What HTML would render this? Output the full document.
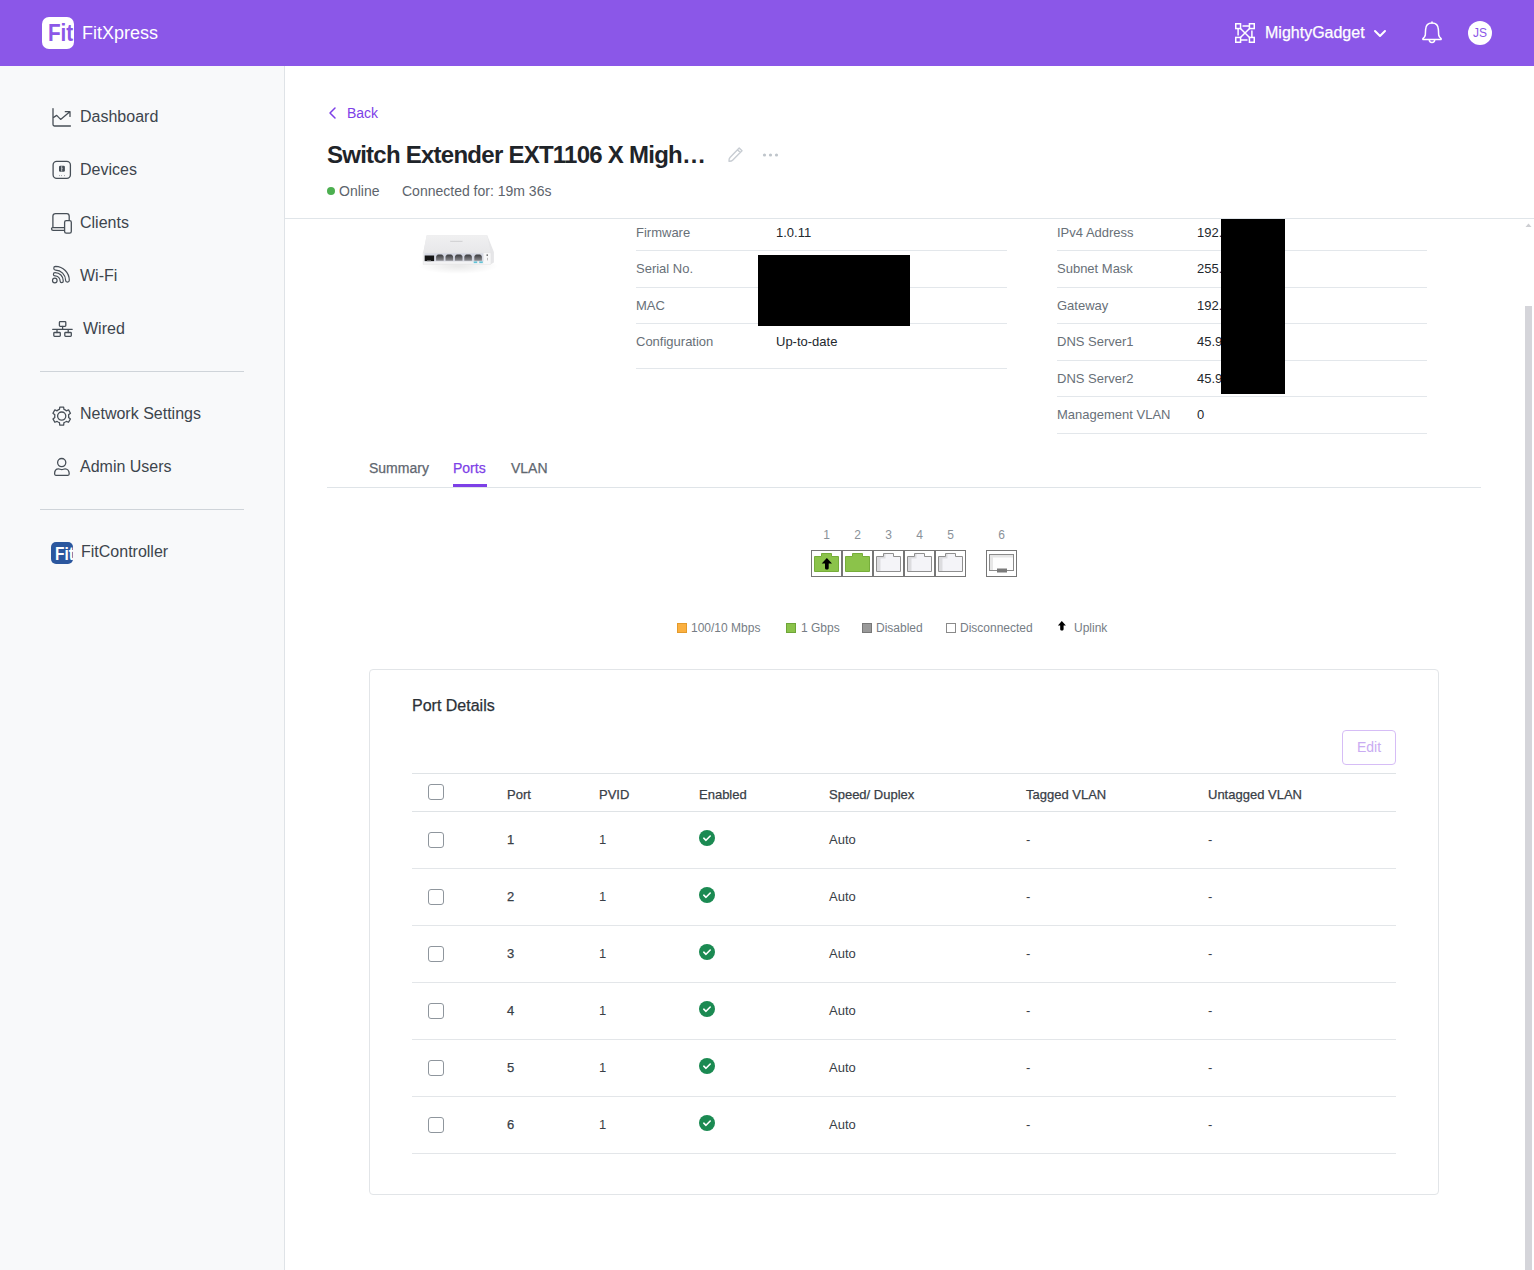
<!DOCTYPE html>
<html><head><meta charset="utf-8">
<style>
*{box-sizing:border-box;margin:0;padding:0}
html,body{width:1534px;height:1270px;overflow:hidden;background:#fff;font-family:"Liberation Sans",sans-serif;}
.a{position:absolute;white-space:nowrap;line-height:20px}
svg{position:absolute;overflow:visible}
#hdr{position:absolute;left:0;top:0;width:1534px;height:66px;background:#8b57e8}
#side{position:absolute;left:0;top:66px;width:285px;height:1204px;background:#f8f9fa;border-right:1px solid #dfe3e7}
.nav{font-size:16px;color:#3d454d}
.dv{position:absolute;left:40px;width:204px;height:1px;background:#cfd4d9}
.hl{position:absolute;height:1px;background:#e3e7eb}
.lbl{font-size:13px;color:#687078}
.val{font-size:13px;color:#23282d}
.med{-webkit-text-stroke:0.25px currentColor}
.th{font-size:13px;color:#394047}
.td{font-size:13px;color:#394047}
.pn{font-size:12px;color:#8a9199;text-align:center;width:20px}
.lg{font-size:12px;color:#767d85}
.cb{position:absolute;width:16px;height:16px;border:1px solid #8f969d;border-radius:3px;background:#fff}
</style></head>
<body>
<!-- HEADER -->
<div id="hdr">
  <div class="a" style="left:42px;top:17px;width:32px;height:32px;background:#fff;border-radius:7px;overflow:hidden">
    <div class="a" style="left:6px;top:6px;font-size:24px;font-weight:bold;color:#8b57e8;transform:scaleX(0.86);transform-origin:0 0;line-height:20px">Fit</div>
  </div>
  <div class="a" style="left:82px;top:23px;font-size:18px;color:#fff">FitXpress</div>
  <svg style="left:1235px;top:23px" width="20" height="20" viewBox="0 0 20 20" fill="none" stroke="#fff" stroke-width="1.5">
    <rect x="0.75" y="0.75" width="4.8" height="4.8"/><rect x="14.45" y="0.75" width="4.8" height="4.8"/>
    <rect x="0.75" y="14.45" width="4.8" height="4.8"/><rect x="14.45" y="14.45" width="4.8" height="4.8"/>
    <path d="M7.5 3.1H14.4M3.1 5.6V12.5M5.6 16.9H12.5M16.9 7.5V14.4M5.2 5.2L14.8 14.8M14.8 5.2L5.2 14.8"/>
  </svg>
  <div class="a med" style="left:1265px;top:23px;font-size:16px;color:#fff">MightyGadget</div>
  <svg style="left:1374px;top:30px" width="12" height="8" viewBox="0 0 12 8" fill="none" stroke="#fff" stroke-width="2" stroke-linecap="round" stroke-linejoin="round">
    <path d="M1 1L6 6L11 1"/>
  </svg>
  <svg style="left:1422px;top:21px" width="20" height="23" viewBox="0 0 20 23" fill="none" stroke="#fff" stroke-width="1.5" stroke-linejoin="round">
    <path d="M10 2.1C6.2 2.1 3.8 4.6 3.6 8.6L3.3 14.2C3.1 15.6 2.2 16.7 0.9 17.7V18.5H19.1V17.7C17.8 16.7 16.9 15.6 16.7 14.2L16.4 8.6C16.2 4.6 13.8 2.1 10 2.1Z"/>
    <path d="M10 0.9V2.1" stroke-linecap="round"/>
    <path d="M7.3 18.7A2.7 2.7 0 0 0 12.7 18.7"/>
  </svg>
  <div class="a" style="left:1468px;top:21px;width:24px;height:24px;border-radius:50%;background:#fff"></div>
  <div class="a" style="left:1468px;top:23px;width:24px;text-align:center;font-size:12px;color:#8b57e8">JS</div>
</div>

<!-- SIDEBAR -->
<div id="side"></div>
<!-- Dashboard icon -->
<svg style="left:48px;top:104px" width="28" height="28" viewBox="0 0 28 28" fill="none" stroke="#474f57" stroke-width="1.3" stroke-linecap="round" stroke-linejoin="round">
  <path d="M5 4.6V20.6C5 21.4 5.6 22 6.4 22H22.4"/>
  <path d="M5.6 13.4L8.7 11.4L12.6 15.4L21.8 7.7M17.3 7.7H22V12.4"/>
</svg>
<div class="a nav" style="left:80px;top:107px">Dashboard</div>
<!-- Devices icon -->
<svg style="left:48px;top:156px" width="28" height="28" viewBox="0 0 28 28" fill="none" stroke="#474f57" stroke-width="1.3">
  <rect x="5.1" y="5.45" width="17.3" height="17" rx="3.6"/>
  <rect x="11" y="9.8" width="5.9" height="6" rx="1.2" fill="#474f57" stroke="none"/>
  <path d="M13.7 10.2V15.4" stroke="#f8f9fa" stroke-width="0.7"/>
  <path d="M13.8 12.3L14.8 12.8L13.8 13.3Z" fill="#f8f9fa" stroke="none"/>
  <path d="M11.3 19.6H11.9M13.2 19.6H13.8M16 19.6H16.6" stroke-width="0.8"/>
</svg>
<div class="a nav" style="left:80px;top:160px">Devices</div>
<!-- Clients icon -->
<svg style="left:48px;top:208px" width="28" height="28" viewBox="0 0 28 28" fill="none" stroke="#474f57" stroke-width="1.3" stroke-linejoin="round">
  <path d="M4.9 19.3V8.3C4.9 6.6 5.9 5.6 7.6 5.6H18.8C20.4 5.6 21.2 6.6 21.2 8.3V12.3"/>
  <path d="M16.4 19.6H4.6C3.9 19.6 3.6 20 3.6 20.6V20.9C3.6 21.8 4.2 22.3 5.1 22.3H16.4"/>
  <rect x="16.6" y="12.6" width="6.7" height="12.6" rx="1.7"/>
</svg>
<div class="a nav" style="left:80px;top:213px">Clients</div>
<!-- WiFi icon -->
<svg style="left:48px;top:262px" width="28" height="28" viewBox="0 0 28 28" fill="none" stroke="#474f57" stroke-width="1.2" stroke-linejoin="round">
  <circle cx="6.8" cy="18.5" r="2.3"/>
  <path d="M7.6 4.4A14 14 0 0 1 21.3 18.2A1.85 1.85 0 0 1 17.6 18.2A10.3 10.3 0 0 0 7.6 8.1A1.85 1.85 0 0 1 7.6 4.4Z"/>
  <path d="M7 10.6A8.2 8.2 0 0 1 15.3 19A1.6 1.6 0 0 1 12.1 19A5 5 0 0 0 7 13.8A1.6 1.6 0 0 1 7 10.6Z"/>
</svg>
<div class="a nav" style="left:80px;top:266px">Wi-Fi</div>
<!-- Wired icon -->
<svg style="left:48px;top:316px" width="28" height="28" viewBox="0 0 28 28" fill="none" stroke="#474f57" stroke-width="1.3" stroke-linecap="round">
  <rect x="11.4" y="5.7" width="6.4" height="4.6" rx="0.8"/>
  <path d="M14.6 10.3V13.3M4.7 13.3H24.2M9 13.3V16.5M20.2 13.3V16.5"/>
  <rect x="5.8" y="16.5" width="6.5" height="3.9" rx="0.8"/>
  <rect x="16.8" y="16.5" width="6.5" height="3.9" rx="0.8"/>
</svg>
<div class="a nav" style="left:83px;top:319px">Wired</div>
<div class="dv" style="top:371px"></div>
<!-- Gear icon -->
<svg style="left:48px;top:402px" width="28" height="28" viewBox="0 0 28 28" fill="none" stroke="#474f57" stroke-width="1.3" stroke-linejoin="round">
  <path d="M11.42 7.48L11.79 5.10L15.61 5.10L15.98 7.48A7.0 7.0 0 0 1 18.29 8.82L20.54 7.94L22.45 11.26L20.57 12.76A7.0 7.0 0 0 1 20.57 15.44L22.45 16.94L20.54 20.26L18.29 19.38A7.0 7.0 0 0 1 15.98 20.72L15.61 23.10L11.79 23.10L11.42 20.72A7.0 7.0 0 0 1 9.11 19.38L6.86 20.26L4.95 16.94L6.83 15.44A7.0 7.0 0 0 1 6.83 12.76L4.95 11.26L6.86 7.94L9.11 8.82A7.0 7.0 0 0 1 11.42 7.48Z"/>
  <circle cx="13.7" cy="14.1" r="4.1"/>
</svg>
<div class="a nav" style="left:80px;top:404px">Network Settings</div>
<!-- User icon -->
<svg style="left:48px;top:453px" width="28" height="28" viewBox="0 0 28 28" fill="none" stroke="#474f57" stroke-width="1.3" stroke-linejoin="round">
  <circle cx="13.7" cy="9.6" r="4.1"/>
  <path d="M6.6 20.8C6.6 17.9 8.2 15.9 10.5 15.9C11.8 15.9 12.5 16.6 13.8 16.6C15.1 16.6 15.8 15.9 17.1 15.9C19.4 15.9 21.2 17.9 21.2 20.8C21.2 21.7 20.8 22.3 20 22.3H7.8C7 22.3 6.6 21.7 6.6 20.8Z"/>
</svg>
<div class="a nav" style="left:80px;top:457px">Admin Users</div>
<div class="dv" style="top:509px"></div>
<!-- FitController logo -->
<div class="a" style="left:51px;top:542px;width:22px;height:22px;background:#2b579e;border-radius:5px;overflow:hidden">
  <div class="a" style="left:4px;top:2px;font-size:18px;font-weight:bold;color:#fff;transform:scaleX(0.86);transform-origin:0 0">Fit</div>
</div>
<div class="a nav" style="left:81px;top:542px">FitController</div>

<!-- MAIN HEADER -->
<svg style="left:328px;top:107px" width="9" height="12" viewBox="0 0 9 12" fill="none" stroke="#7d40e7" stroke-width="1.5" stroke-linecap="round" stroke-linejoin="round">
  <path d="M7 1L2 6L7 11"/>
</svg>
<div class="a" style="left:347px;top:103px;font-size:14px;color:#7d40e7">Back</div>
<div class="a" style="left:327px;top:145px;font-size:24px;font-weight:bold;color:#1f2429;letter-spacing:-0.75px">Switch Extender EXT1106 X Migh…</div>
<svg style="left:728px;top:147px" width="15" height="15" viewBox="0 0 15 15" fill="none" stroke="#c8cdd3" stroke-width="1.4" stroke-linejoin="round">
  <path d="M11.2 1L14 3.8L4.6 13.2C4 13.8 2.7 14.3 1 14.2C0.9 12.5 1.4 11.2 2 10.6Z M9.5 2.7L12.3 5.5"/>
</svg>
<svg style="left:762px;top:152px" width="18" height="6" viewBox="0 0 18 6">
  <circle cx="2.5" cy="3" r="1.6" fill="#bfc5cb"/><circle cx="8.5" cy="3" r="1.6" fill="#bfc5cb"/><circle cx="14.5" cy="3" r="1.6" fill="#bfc5cb"/>
</svg>
<div class="a" style="left:327px;top:187px;width:8px;height:8px;border-radius:50%;background:#4caf50"></div>
<div class="a" style="left:339px;top:181px;font-size:14px;color:#5d646c">Online</div>
<div class="a" style="left:402px;top:181px;font-size:14px;color:#5d646c">Connected for: 19m 36s</div>
<div class="hl" style="left:285px;top:218px;width:1249px;background:#e0e5e9"></div>

<!-- scrollbar -->
<div class="a" style="left:1525px;top:306px;width:7px;height:964px;background:#d5d5da"></div>
<svg style="left:1525px;top:223px" width="7" height="4" viewBox="0 0 7 4"><path d="M0.5 4L3.5 0.6L6.5 4Z" fill="#cdced2"/></svg>

<!-- DEVICE IMAGE -->
<svg style="left:410px;top:228px" width="100" height="55" viewBox="0 0 100 55">
  <defs>
    <radialGradient id="sh" cx="50%" cy="50%" r="50%"><stop offset="0" stop-color="#000" stop-opacity="0.09"/><stop offset="1" stop-color="#000" stop-opacity="0"/></radialGradient>
    <linearGradient id="tp" x1="0" y1="0" x2="0" y2="1"><stop offset="0" stop-color="#f0f0f1"/><stop offset="1" stop-color="#e8e8ea"/></linearGradient>
    <linearGradient id="pg" x1="0" y1="0" x2="0" y2="1"><stop offset="0" stop-color="#3a3a3c"/><stop offset="1" stop-color="#8e8e92"/></linearGradient>
  </defs>
  <ellipse cx="48" cy="38" rx="40" ry="8" fill="url(#sh)"/>
  <path d="M16.7 7.3H77.2L83.9 24V34.5L80.7 36.3V24.6H13.3Z" fill="#e6e6e8"/>
  <path d="M16.7 7.3H77.2L80.7 24.6H13.3Z" fill="url(#tp)"/>
  <path d="M13.2 24.6H80.7V36.3H13.2Z" fill="#f3f3f4" stroke="#dcdcde" stroke-width="0.5"/>
  <rect x="14.4" y="25.2" width="59" height="8.2" fill="#d5d8e2"/>
  <rect x="14.7" y="27.5" width="9.4" height="5.6" fill="#141414"/>
  <rect x="17" y="32.2" width="4" height="1" fill="#777"/>
  <path d="M26.1 32.8V29C26.1 27.5 27.1 26.6 29.9 26.6C32.7 26.6 33.7 27.5 33.7 29V32.8Z" fill="url(#pg)"/><path d="M35.5 32.8V29C35.5 27.5 36.5 26.6 39.3 26.6C42.1 26.6 43.1 27.5 43.1 29V32.8Z" fill="url(#pg)"/><path d="M44.9 32.8V29C44.9 27.5 45.9 26.6 48.7 26.6C51.5 26.6 52.5 27.5 52.5 29V32.8Z" fill="url(#pg)"/><path d="M54.3 32.8V29C54.3 27.5 55.3 26.6 58.1 26.6C60.9 26.6 61.9 27.5 61.9 29V32.8Z" fill="url(#pg)"/><path d="M64.3 32.8V29C64.3 27.5 65.3 26.6 68.1 26.6C70.9 26.6 71.9 27.5 71.9 29V32.8Z" fill="url(#pg)"/>
  <rect x="63.7" y="33.4" width="3.5" height="1.7" fill="#62c2d6"/>
  <rect x="69.3" y="33.4" width="3.5" height="1.7" fill="#62c2d6"/>
  <rect x="74" y="25.3" width="6.5" height="10.8" fill="#f7f7f8"/>
  <rect x="76.5" y="26.5" width="1.5" height="1.2" fill="#444"/>
  <rect x="77" y="29.8" width="0.6" height="2.6" fill="#999"/>
  <rect x="40.2" y="12.8" width="12.3" height="1.2" fill="#d4d4d6"/>
</svg>

<!-- INFO TABLE LEFT -->
<div class="a lbl" style="left:636px;top:223px">Firmware</div>
<div class="a val" style="left:776px;top:223px">1.0.11</div>
<div class="hl" style="left:636px;top:250px;width:371px"></div>
<div class="a lbl" style="left:636px;top:259px">Serial No.</div>
<div class="hl" style="left:636px;top:287px;width:371px"></div>
<div class="a lbl" style="left:636px;top:296px">MAC</div>
<div class="hl" style="left:636px;top:323px;width:371px"></div>
<div class="a lbl" style="left:636px;top:332px">Configuration</div>
<div class="a val" style="left:776px;top:332px">Up-to-date</div>
<div class="hl" style="left:636px;top:368px;width:371px"></div>
<div class="a" style="left:758px;top:255px;width:152px;height:71px;background:#000"></div>

<!-- INFO TABLE RIGHT -->
<div class="a lbl" style="left:1057px;top:223px">IPv4 Address</div>
<div class="a val" style="left:1197px;top:223px">192.</div>
<div class="hl" style="left:1057px;top:250px;width:370px"></div>
<div class="a lbl" style="left:1057px;top:259px">Subnet Mask</div>
<div class="a val" style="left:1197px;top:259px">255.</div>
<div class="hl" style="left:1057px;top:287px;width:370px"></div>
<div class="a lbl" style="left:1057px;top:296px">Gateway</div>
<div class="a val" style="left:1197px;top:296px">192.</div>
<div class="hl" style="left:1057px;top:323px;width:370px"></div>
<div class="a lbl" style="left:1057px;top:332px">DNS Server1</div>
<div class="a val" style="left:1197px;top:332px">45.9</div>
<div class="hl" style="left:1057px;top:360px;width:370px"></div>
<div class="a lbl" style="left:1057px;top:369px">DNS Server2</div>
<div class="a val" style="left:1197px;top:369px">45.9</div>
<div class="hl" style="left:1057px;top:396px;width:370px"></div>
<div class="a lbl" style="left:1057px;top:405px">Management VLAN</div>
<div class="a val" style="left:1197px;top:405px">0</div>
<div class="hl" style="left:1057px;top:433px;width:370px"></div>
<div class="a" style="left:1221px;top:219px;width:64px;height:175px;background:#000"></div>

<!-- TABS -->
<div class="a med" style="left:369px;top:458px;font-size:14px;color:#5f6770">Summary</div>
<div class="a med" style="left:453px;top:458px;font-size:14px;color:#7d40e7">Ports</div>
<div class="a med" style="left:511px;top:458px;font-size:14px;color:#5f6770">VLAN</div>
<div class="hl" style="left:327px;top:487px;width:1154px;background:#dfe4e8"></div>
<div class="a" style="left:453px;top:484px;width:34px;height:3px;background:#7d40e7"></div>

<!-- PORTS -->
<div class="a pn" style="left:816.5px;top:525px">1</div>
<div class="a pn" style="left:847.5px;top:525px">2</div>
<div class="a pn" style="left:878.5px;top:525px">3</div>
<div class="a pn" style="left:909.5px;top:525px">4</div>
<div class="a pn" style="left:940.5px;top:525px">5</div>
<div class="a pn" style="left:991.5px;top:525px">6</div>
<svg style="left:811px;top:550px" width="31" height="27" viewBox="0 0 31 27"><rect x="0.5" y="0.5" width="30" height="26" fill="#fff" stroke="#767676" stroke-width="1"/><path d="M3.5 6.5H10.5V3.5H20.5V6.5H27.5V21.5H3.5Z" fill="#8bc34a" stroke="#76ad3a" stroke-width="1"/><path d="M15.85 8.1L21 13.4H17.7V18C17.7 19 17 19.5 15.9 19.5C14.8 19.5 14 19 14 18V13.4H10.7Z" fill="#000"/></svg>
<svg style="left:842px;top:550px" width="31" height="27" viewBox="0 0 31 27"><rect x="0.5" y="0.5" width="30" height="26" fill="#fff" stroke="#767676" stroke-width="1"/><path d="M3.5 6.5H10.5V3.5H20.5V6.5H27.5V21.5H3.5Z" fill="#8bc34a" stroke="#76ad3a" stroke-width="1"/></svg>
<svg style="left:873px;top:550px" width="31" height="27" viewBox="0 0 31 27"><rect x="0.5" y="0.5" width="30" height="26" fill="#fff" stroke="#767676" stroke-width="1"/><path d="M3.5 6.5H10.5V3.5H20.5V6.5H27.5V21.5H3.5Z" fill="#f4f4f8" stroke="#8f8f8f" stroke-width="1"/><path d="M4 7H11V4H12.5V8.5H7.5V21H4Z" fill="#dcdcdf"/></svg>
<svg style="left:904px;top:550px" width="31" height="27" viewBox="0 0 31 27"><rect x="0.5" y="0.5" width="30" height="26" fill="#fff" stroke="#767676" stroke-width="1"/><path d="M3.5 6.5H10.5V3.5H20.5V6.5H27.5V21.5H3.5Z" fill="#f4f4f8" stroke="#8f8f8f" stroke-width="1"/><path d="M4 7H11V4H12.5V8.5H7.5V21H4Z" fill="#dcdcdf"/></svg>
<svg style="left:935px;top:550px" width="31" height="27" viewBox="0 0 31 27"><rect x="0.5" y="0.5" width="30" height="26" fill="#fff" stroke="#767676" stroke-width="1"/><path d="M3.5 6.5H10.5V3.5H20.5V6.5H27.5V21.5H3.5Z" fill="#f4f4f8" stroke="#8f8f8f" stroke-width="1"/><path d="M4 7H11V4H12.5V8.5H7.5V21H4Z" fill="#dcdcdf"/></svg>
<svg style="left:986px;top:550px" width="31" height="27" viewBox="0 0 31 27"><rect x="0.5" y="0.5" width="30" height="26" fill="#fff" stroke="#767676" stroke-width="1"/><rect x="3.5" y="4.5" width="24" height="16" fill="#fdfdfd" stroke="#8a8a8a" stroke-width="1"/><path d="M4 5H27V7.5H7V20H4Z" fill="#e6e6e6"/><rect x="11" y="18.5" width="10" height="4" fill="#7a7a7a"/></svg>
<!-- LEGEND -->
<div class="a" style="left:677px;top:623px;width:10px;height:10px;background:#fbb040;border:1px solid #e39a2c"></div>
<div class="a lg" style="left:691px;top:618px">100/10 Mbps</div>
<div class="a" style="left:786px;top:623px;width:10px;height:10px;background:#8bc34a;border:1px solid #6ea538"></div>
<div class="a lg" style="left:801px;top:618px">1 Gbps</div>
<div class="a" style="left:862px;top:623px;width:10px;height:10px;background:#999;border:1px solid #777"></div>
<div class="a lg" style="left:876px;top:618px">Disabled</div>
<div class="a" style="left:946px;top:623px;width:10px;height:10px;background:#fff;border:1px solid #8a8a8a"></div>
<div class="a lg" style="left:960px;top:618px">Disconnected</div>
<svg style="left:1057px;top:621px" width="10" height="10" viewBox="0 0 10 10"><path d="M4.8 0.1L8.9 4.6H6.6V8C6.6 9 5.9 9.6 4.9 9.6C3.9 9.6 3.2 9 3.2 8V4.6H0.9Z" fill="#000"/></svg>
<div class="a lg" style="left:1074px;top:618px">Uplink</div>
<!-- CARD -->
<div class="a" style="left:369px;top:669px;width:1070px;height:526px;border:1px solid #e2e5e8;border-radius:4px;background:#fff"></div>
<div class="a med" style="left:412px;top:696px;font-size:16px;color:#2b3137">Port Details</div>
<div class="a" style="left:1342px;top:730px;width:54px;height:35px;border:1px solid #d6bdf6;border-radius:4px"></div>
<div class="a" style="left:1342px;top:737px;width:54px;text-align:center;font-size:14px;color:#c9acf2">Edit</div>
<div class="hl" style="left:412px;top:773px;width:984px;background:#dfe3e6"></div>
<div class="cb" style="left:428px;top:784px"></div>
<div class="a th med" style="left:507px;top:785px">Port</div>
<div class="a th med" style="left:599px;top:785px">PVID</div>
<div class="a th med" style="left:699px;top:785px">Enabled</div>
<div class="a th med" style="left:829px;top:785px">Speed/ Duplex</div>
<div class="a th med" style="left:1026px;top:785px">Tagged VLAN</div>
<div class="a th med" style="left:1208px;top:785px">Untagged VLAN</div>
<div class="hl" style="left:412px;top:811px;width:984px;background:#dfe3e6"></div>
<div class="cb" style="left:428px;top:832px"></div>
<div class="a td med" style="left:507px;top:830px">1</div>
<div class="a td" style="left:599px;top:830px">1</div>
<svg style="left:699px;top:830px" width="16" height="16" viewBox="0 0 16 16"><circle cx="8" cy="8" r="8" fill="#1b8a52"/><path d="M4.8 8.2L7 10.3L11.2 6" fill="none" stroke="#fff" stroke-width="1.6" stroke-linecap="round" stroke-linejoin="round"/></svg>
<div class="a td" style="left:829px;top:830px">Auto</div>
<div class="a td" style="left:1026px;top:830px">-</div>
<div class="a td" style="left:1208px;top:830px">-</div>
<div class="hl" style="left:412px;top:868px;width:984px;background:#e3e6e9"></div>
<div class="cb" style="left:428px;top:889px"></div>
<div class="a td med" style="left:507px;top:887px">2</div>
<div class="a td" style="left:599px;top:887px">1</div>
<svg style="left:699px;top:887px" width="16" height="16" viewBox="0 0 16 16"><circle cx="8" cy="8" r="8" fill="#1b8a52"/><path d="M4.8 8.2L7 10.3L11.2 6" fill="none" stroke="#fff" stroke-width="1.6" stroke-linecap="round" stroke-linejoin="round"/></svg>
<div class="a td" style="left:829px;top:887px">Auto</div>
<div class="a td" style="left:1026px;top:887px">-</div>
<div class="a td" style="left:1208px;top:887px">-</div>
<div class="hl" style="left:412px;top:925px;width:984px;background:#e3e6e9"></div>
<div class="cb" style="left:428px;top:946px"></div>
<div class="a td med" style="left:507px;top:944px">3</div>
<div class="a td" style="left:599px;top:944px">1</div>
<svg style="left:699px;top:944px" width="16" height="16" viewBox="0 0 16 16"><circle cx="8" cy="8" r="8" fill="#1b8a52"/><path d="M4.8 8.2L7 10.3L11.2 6" fill="none" stroke="#fff" stroke-width="1.6" stroke-linecap="round" stroke-linejoin="round"/></svg>
<div class="a td" style="left:829px;top:944px">Auto</div>
<div class="a td" style="left:1026px;top:944px">-</div>
<div class="a td" style="left:1208px;top:944px">-</div>
<div class="hl" style="left:412px;top:982px;width:984px;background:#e3e6e9"></div>
<div class="cb" style="left:428px;top:1003px"></div>
<div class="a td med" style="left:507px;top:1001px">4</div>
<div class="a td" style="left:599px;top:1001px">1</div>
<svg style="left:699px;top:1001px" width="16" height="16" viewBox="0 0 16 16"><circle cx="8" cy="8" r="8" fill="#1b8a52"/><path d="M4.8 8.2L7 10.3L11.2 6" fill="none" stroke="#fff" stroke-width="1.6" stroke-linecap="round" stroke-linejoin="round"/></svg>
<div class="a td" style="left:829px;top:1001px">Auto</div>
<div class="a td" style="left:1026px;top:1001px">-</div>
<div class="a td" style="left:1208px;top:1001px">-</div>
<div class="hl" style="left:412px;top:1039px;width:984px;background:#e3e6e9"></div>
<div class="cb" style="left:428px;top:1060px"></div>
<div class="a td med" style="left:507px;top:1058px">5</div>
<div class="a td" style="left:599px;top:1058px">1</div>
<svg style="left:699px;top:1058px" width="16" height="16" viewBox="0 0 16 16"><circle cx="8" cy="8" r="8" fill="#1b8a52"/><path d="M4.8 8.2L7 10.3L11.2 6" fill="none" stroke="#fff" stroke-width="1.6" stroke-linecap="round" stroke-linejoin="round"/></svg>
<div class="a td" style="left:829px;top:1058px">Auto</div>
<div class="a td" style="left:1026px;top:1058px">-</div>
<div class="a td" style="left:1208px;top:1058px">-</div>
<div class="hl" style="left:412px;top:1096px;width:984px;background:#e3e6e9"></div>
<div class="cb" style="left:428px;top:1117px"></div>
<div class="a td med" style="left:507px;top:1115px">6</div>
<div class="a td" style="left:599px;top:1115px">1</div>
<svg style="left:699px;top:1115px" width="16" height="16" viewBox="0 0 16 16"><circle cx="8" cy="8" r="8" fill="#1b8a52"/><path d="M4.8 8.2L7 10.3L11.2 6" fill="none" stroke="#fff" stroke-width="1.6" stroke-linecap="round" stroke-linejoin="round"/></svg>
<div class="a td" style="left:829px;top:1115px">Auto</div>
<div class="a td" style="left:1026px;top:1115px">-</div>
<div class="a td" style="left:1208px;top:1115px">-</div>
<div class="hl" style="left:412px;top:1153px;width:984px;background:#e3e6e9"></div>
</body></html>
